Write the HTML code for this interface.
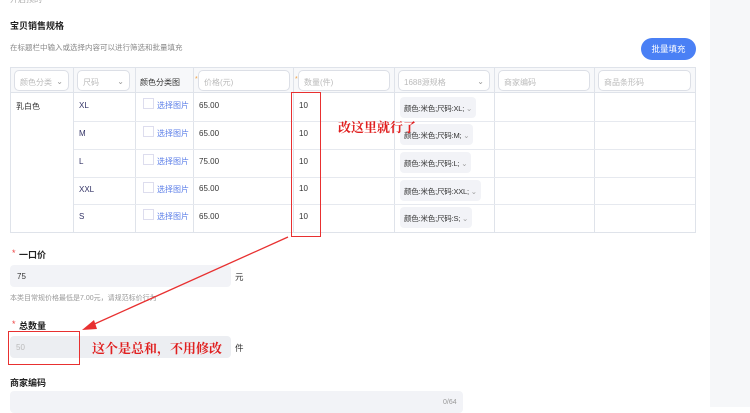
<!DOCTYPE html>
<html><head><meta charset="utf-8"><style>
*{margin:0;padding:0;box-sizing:border-box}
body{width:750px;height:407px;overflow:hidden;background:#fff;font-family:"Liberation Sans","Noto Sans CJK SC",sans-serif;color:#333;position:relative}
.a{position:absolute;white-space:nowrap}
.t{font-size:8px;color:#333}
.g{color:#aaa}
.hb{position:absolute;border:1px solid #dcdfe6;border-radius:5px;background:#fff;height:21px;font-size:8px;color:#bbb;padding:6px 5px;white-space:nowrap}
.sel{position:absolute;background:#f2f3f7;border-radius:4px;height:21px;font-size:7.5px;color:#333;padding:6px 4px;white-space:nowrap;letter-spacing:-0.2px}
.chk{position:absolute;width:11px;height:11px;border:1px solid #dde;background:#fff}
.red{font-family:"Noto Serif CJK SC","Liberation Serif",serif;color:#e02020;font-size:13px;font-weight:bold}
</style></head><body>
<div class="a" style="left:710px;top:0;width:40px;height:407px;background:#f6f7f9"></div>
<div class="a t g" style="left:10px;top:-6px">开启预的</div>
<div class="a" style="left:10px;top:19px;font-size:9px;font-weight:bold;color:#222">宝贝销售规格</div>
<div class="a g" style="left:10px;top:42px;font-size:7.5px;color:#888">在标题栏中输入或选择内容可以进行筛选和批量填充</div>
<div class="a" style="left:641px;top:38px;width:55px;height:22px;border-radius:11px;background:#4a80f5;color:#fff;font-size:8.5px;text-align:center;line-height:22px">批量填充</div>
<div class="a" style="left:10px;top:67px;width:686px;height:166px;border:1px solid #dfe3ea"></div>
<div class="a" style="left:11px;top:68px;width:684px;height:25px;background:#f7f8fa;border-bottom:1px solid #dfe3ea"></div>
<div class="a" style="left:73px;top:68px;width:1px;height:164px;background:#dfe3ea"></div>
<div class="a" style="left:135px;top:68px;width:1px;height:164px;background:#dfe3ea"></div>
<div class="a" style="left:193px;top:68px;width:1px;height:164px;background:#dfe3ea"></div>
<div class="a" style="left:293px;top:68px;width:1px;height:164px;background:#dfe3ea"></div>
<div class="a" style="left:394px;top:68px;width:1px;height:164px;background:#dfe3ea"></div>
<div class="a" style="left:494px;top:68px;width:1px;height:164px;background:#dfe3ea"></div>
<div class="a" style="left:594px;top:68px;width:1px;height:164px;background:#dfe3ea"></div>
<div class="a" style="left:74px;top:121px;width:621px;height:1px;background:#e6e9ef"></div>
<div class="a" style="left:74px;top:149px;width:621px;height:1px;background:#e6e9ef"></div>
<div class="a" style="left:74px;top:177px;width:621px;height:1px;background:#e6e9ef"></div>
<div class="a" style="left:74px;top:204px;width:621px;height:1px;background:#e6e9ef"></div>
<div class="hb" style="left:14px;top:70px;width:55px">颜色分类<span style="float:right;color:#999">⌄</span></div>
<div class="hb" style="left:77px;top:70px;width:53px">尺码<span style="float:right;color:#999">⌄</span></div>
<div class="a t" style="left:140px;top:77px">颜色分类图</div>
<div class="a" style="left:195px;top:76px;font-size:7px;color:#f0a040">*</div>
<div class="hb" style="left:198px;top:70px;width:92px">价格(元)</div>
<div class="a" style="left:295px;top:76px;font-size:7px;color:#f0a040">*</div>
<div class="hb" style="left:298px;top:70px;width:92px">数量(件)</div>
<div class="hb" style="left:398px;top:70px;width:92px">1688源规格<span style="float:right;color:#999">⌄</span></div>
<div class="hb" style="left:498px;top:70px;width:92px">商家编码</div>
<div class="hb" style="left:598px;top:70px;width:93px">商品条形码</div>
<div class="a t" style="left:16px;top:101px">乳白色</div>
<div class="a t" style="left:79px;top:101px;color:#336">XL</div>
<div class="a t" style="left:79px;top:129px;color:#336">M</div>
<div class="a t" style="left:79px;top:157px;color:#336">L</div>
<div class="a t" style="left:79px;top:185px;color:#336">XXL</div>
<div class="a t" style="left:79px;top:212px;color:#336">S</div>
<div class="chk" style="left:143px;top:98px"></div><div class="a t" style="left:157px;top:100px;color:#5b7ee8">选择图片</div>
<div class="chk" style="left:143px;top:126px"></div><div class="a t" style="left:157px;top:128px;color:#5b7ee8">选择图片</div>
<div class="chk" style="left:143px;top:154px"></div><div class="a t" style="left:157px;top:156px;color:#5b7ee8">选择图片</div>
<div class="chk" style="left:143px;top:182px"></div><div class="a t" style="left:157px;top:184px;color:#5b7ee8">选择图片</div>
<div class="chk" style="left:143px;top:209px"></div><div class="a t" style="left:157px;top:211px;color:#5b7ee8">选择图片</div>
<div class="a t" style="left:199px;top:101px">65.00</div>
<div class="a t" style="left:199px;top:129px">65.00</div>
<div class="a t" style="left:199px;top:157px">75.00</div>
<div class="a t" style="left:199px;top:184px">65.00</div>
<div class="a t" style="left:199px;top:212px">65.00</div>
<div class="a t" style="left:299px;top:101px">10</div>
<div class="a t" style="left:299px;top:129px">10</div>
<div class="a t" style="left:299px;top:157px">10</div>
<div class="a t" style="left:299px;top:184px">10</div>
<div class="a t" style="left:299px;top:212px">10</div>
<div class="sel" style="left:400px;top:97px">颜色:米色;尺码:XL; <span style="color:#999">⌄</span></div>
<div class="sel" style="left:400px;top:124px">颜色:米色;尺码:M; <span style="color:#999">⌄</span></div>
<div class="sel" style="left:400px;top:152px">颜色:米色;尺码:L; <span style="color:#999">⌄</span></div>
<div class="sel" style="left:400px;top:180px">颜色:米色;尺码:XXL; <span style="color:#999">⌄</span></div>
<div class="sel" style="left:400px;top:207px">颜色:米色;尺码:S; <span style="color:#999">⌄</span></div>
<div class="a" style="left:12px;top:248px;font-size:9px;color:#e44">*</div>
<div class="a" style="left:19px;top:248px;font-size:9px;font-weight:bold;color:#222">一口价</div>
<div class="a" style="left:10px;top:265px;width:221px;height:22px;background:#f2f3f7;border-radius:4px"></div>
<div class="a t" style="left:17px;top:272px">75</div>
<div class="a t" style="left:235px;top:271px;font-size:8.5px">元</div>
<div class="a" style="left:10px;top:293px;font-size:7px;color:#999">本类目常规价格最低是7.00元，请规范标价行为</div>
<div class="a" style="left:12px;top:319px;font-size:9px;color:#e44">*</div>
<div class="a" style="left:19px;top:319px;font-size:9px;font-weight:bold;color:#222">总数量</div>
<div class="a" style="left:10px;top:336px;width:221px;height:22px;background:#eceef2;border-radius:4px"></div>
<div class="a t" style="left:16px;top:343px;color:#bbb">50</div>
<div class="a t" style="left:235px;top:342px;font-size:8.5px">件</div>
<div class="a" style="left:10px;top:376px;font-size:9px;font-weight:bold;color:#222">商家编码</div>
<div class="a" style="left:10px;top:391px;width:453px;height:22px;background:#f2f3f7;border-radius:4px"></div>
<div class="a" style="left:443px;top:399px;font-size:7px;color:#999">0/64</div>
<div class="a" style="left:291px;top:92px;width:30px;height:145px;border:1.5px solid #e83030"></div>
<div class="a red" style="left:338px;top:117px">改这里就行了</div>
<div class="a" style="left:8px;top:331px;width:72px;height:34px;border:1.5px solid #e83030"></div>
<div class="a red" style="left:92px;top:338px">这个是总和，不用修改</div>
<svg class="a" style="left:0;top:0" width="750" height="407"><line x1="288" y1="237" x2="90" y2="326" stroke="#e83030" stroke-width="1.3"/><polygon points="82,330 94,320 97,329" fill="#e83030"/></svg>
</body></html>
